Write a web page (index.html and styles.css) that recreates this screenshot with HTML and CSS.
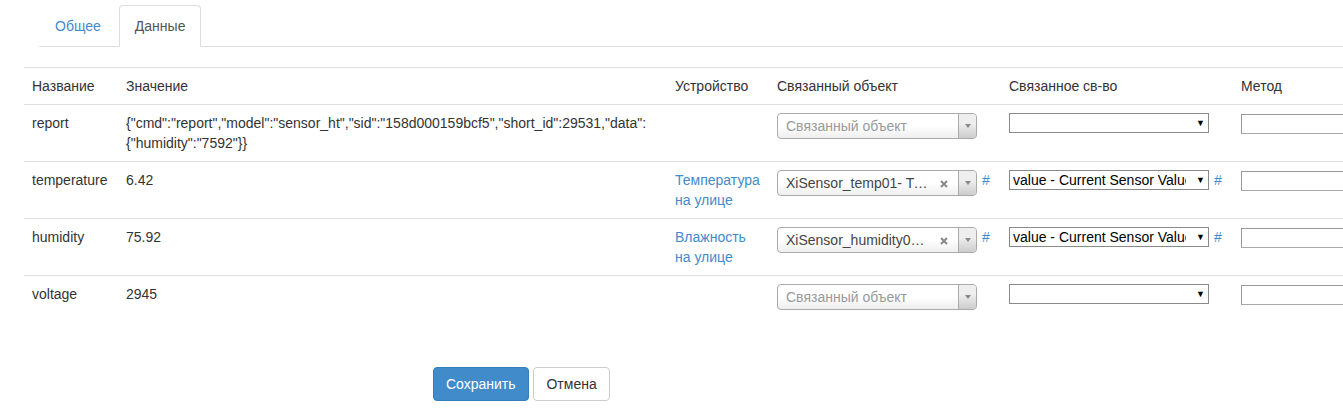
FILE: index.html
```html
<!DOCTYPE html>
<html lang="ru">

<head>
    <link rel="stylesheet" href="styles.css">
    <meta charset="UTF-8">
    <title>Данные</title>
</head>

<body>
    <div class="page">
        <ul class="nav-tabs">
            <li><a href="#">Общее</a></li>
            <li class="active"><a href="#">Данные</a></li>
        </ul>

        <form class="data-form">
            <table class="data-table">
                <colgroup>
                    <col class="c-name">
                    <col class="c-value">
                    <col class="c-device">
                    <col class="c-object">
                    <col class="c-prop">
                    <col class="c-method">
                </colgroup>
                <thead>
                    <tr>
                        <th>Название</th>
                        <th>Значение</th>
                        <th>Устройство</th>
                        <th>Связанный объект</th>
                        <th>Связанное св-во</th>
                        <th>Метод</th>
                    </tr>
                </thead>
                <tbody>
                    <tr>
                        <td>report</td>
                        <td>{"cmd":"report","model":"sensor_ht","sid":"158d000159bcf5","short_id":29531,"data":<wbr>{"humidity":"7592"}}</td>
                        <td></td>
                        <td>
                            <div class="bind">
                                <div class="select2">
                                    <span class="s2-text placeholder">Связанный объект</span>
                                    <span class="s2-arrow"><b></b></span>
                                </div>
                            </div>
                        </td>
                        <td>
                            <div class="bind">
                                <div class="native-select"><span class="ns-text"></span><span class="ns-arrow">&#9660;</span></div>
                            </div>
                        </td>
                        <td><div class="text-input"></div></td>
                    </tr>
                    <tr>
                        <td>temperature</td>
                        <td>6.42</td>
                        <td><a href="#">Температура на улице</a></td>
                        <td>
                            <div class="bind">
                                <div class="select2">
                                    <span class="s2-text">XiSensor_temp01- Температура на улице</span>
                                    <span class="s2-clear"><svg width="8" height="8" viewBox="0 0 8 8"><path d="M1 1L7 7M7 1L1 7" stroke="#888" stroke-width="2"/></svg></span>
                                    <span class="s2-arrow"><b></b></span>
                                </div>
                                <a href="#">#</a>
                            </div>
                        </td>
                        <td>
                            <div class="bind">
                                <div class="native-select"><span class="ns-text">value - Current Sensor Value</span><span class="ns-arrow">&#9660;</span></div>
                                <a href="#">#</a>
                            </div>
                        </td>
                        <td><div class="text-input"></div></td>
                    </tr>
                    <tr>
                        <td>humidity</td>
                        <td>75.92</td>
                        <td><a href="#">Влажность на улице</a></td>
                        <td>
                            <div class="bind">
                                <div class="select2">
                                    <span class="s2-text">XiSensor_humidity01- Влажность на улице</span>
                                    <span class="s2-clear"><svg width="8" height="8" viewBox="0 0 8 8"><path d="M1 1L7 7M7 1L1 7" stroke="#888" stroke-width="2"/></svg></span>
                                    <span class="s2-arrow"><b></b></span>
                                </div>
                                <a href="#">#</a>
                            </div>
                        </td>
                        <td>
                            <div class="bind">
                                <div class="native-select"><span class="ns-text">value - Current Sensor Value</span><span class="ns-arrow">&#9660;</span></div>
                                <a href="#">#</a>
                            </div>
                        </td>
                        <td><div class="text-input"></div></td>
                    </tr>
                    <tr class="last">
                        <td>voltage</td>
                        <td>2945</td>
                        <td></td>
                        <td>
                            <div class="bind">
                                <div class="select2">
                                    <span class="s2-text placeholder">Связанный объект</span>
                                    <span class="s2-arrow"><b></b></span>
                                </div>
                            </div>
                        </td>
                        <td>
                            <div class="bind">
                                <div class="native-select"><span class="ns-text"></span><span class="ns-arrow">&#9660;</span></div>
                            </div>
                        </td>
                        <td><div class="text-input"></div></td>
                    </tr>
                </tbody>
            </table>

            <div class="form-actions">
                <button type="button" class="btn btn-primary">Сохранить</button>
                <button type="button" class="btn btn-default">Отмена</button>
            </div>
        </form>
    </div>
</body>

</html>
```

FILE: styles.css
```css
html,
body {
    margin: 0;
    padding: 0;
    font-family: "Liberation Sans", Arial, sans-serif;
    font-size: 14px;
    line-height: 20px;
    color: #333;
    background-color: #fff;
}

* {
    box-sizing: border-box;
}

a {
    color: #428bca;
    text-decoration: none;
}

.page {
    width: 1343px;
    overflow: hidden;
    padding-top: 5px;
}

/* TABS */
.nav-tabs {
    display: flex;
    margin: 0 0 0 39px;
    padding: 0;
    list-style: none;
    border-bottom: 1px solid #ddd;
}

.nav-tabs li {
    margin-right: 2px;
    margin-bottom: -1px;
}

.nav-tabs a {
    display: block;
    padding: 10px 15px;
    border: 1px solid transparent;
    border-radius: 4px 4px 0 0;
}

.nav-tabs .active a {
    color: #555;
    background: #fff;
    border-color: #ddd #ddd transparent;
}

/* DATA TABLE */
.data-form {
    margin: 20px 0 0 24px;
}

.data-table {
    width: 1409px;
    table-layout: fixed;
    border-collapse: collapse;
    border-spacing: 0;
    font-size: 14px;
    line-height: 20px;
}

.c-name {
    width: 94px;
}

.c-value {
    width: 549px;
}

.c-device {
    width: 102px;
}

.c-object {
    width: 232px;
}

.c-prop {
    width: 232px;
}

.c-method {
    width: 200px;
}

.data-table th,
.data-table td {
    padding: 8px;
    text-align: left;
    vertical-align: top;
    font-weight: normal;
    border-top: 1px solid #ddd;
}

.data-table td {
    word-wrap: break-word;
}

.bind {
    display: flex;
    align-items: flex-start;
    gap: 5px;
}

/* SELECT2 */
.select2 {
    display: flex;
    width: 200px;
    height: 26px;
    line-height: 24px;
    padding-left: 8px;
    border: 1px solid #aaa;
    border-radius: 4px;
    color: #444;
    background: linear-gradient(to top, #eee 0%, #fff 50%);
}

.s2-text {
    flex: 1;
    overflow: hidden;
    white-space: nowrap;
    text-overflow: ellipsis;
    margin-right: 8px;
}

.s2-text.placeholder {
    color: #999;
}

.s2-clear {
    display: flex;
    align-items: center;
    width: 18px;
    padding-top: 2px;
}

.s2-arrow {
    display: flex;
    align-items: center;
    justify-content: center;
    width: 18px;
    border-left: 1px solid #aaa;
    border-radius: 0 4px 4px 0;
    background: linear-gradient(to top, #ccc 0%, #eee 60%);
}

.s2-arrow b {
    width: 0;
    height: 0;
    border-left: 3px solid transparent;
    border-right: 3px solid transparent;
    border-top: 4px solid #888;
}

/* NATIVE SELECT */
.native-select {
    display: flex;
    align-items: center;
    width: 200px;
    height: 20px;
    padding: 0 3px 0 3px;
    border: 1px solid #8a8a8a;
    font-size: 14px;
    color: #000;
    background: #fff;
}

.ns-text {
    flex: 1;
    overflow: hidden;
    white-space: nowrap;
}

.ns-arrow {
    width: 19px;
    text-align: right;
    font-size: 9px;
}

.text-input {
    width: 200px;
    height: 20px;
    margin-top: 1px;
    border: 1px solid #aaa;
    border-top-color: #999;
    border-left-color: #999;
    background: #fff;
}

/* BUTTONS */
.form-actions {
    margin: 49px 0 0 409px;
}

.btn {
    display: inline-block;
    padding: 6px 12px;
    margin-right: 1px;
    font-family: inherit;
    font-size: 14px;
    line-height: 20px;
    border: 1px solid transparent;
    border-radius: 4px;
    cursor: pointer;
}

.btn-primary {
    color: #fff;
    background-color: #428bca;
    border-color: #357ebd;
}

.btn-default {
    color: #333;
    background-color: #fff;
    border-color: #ccc;
}
```
